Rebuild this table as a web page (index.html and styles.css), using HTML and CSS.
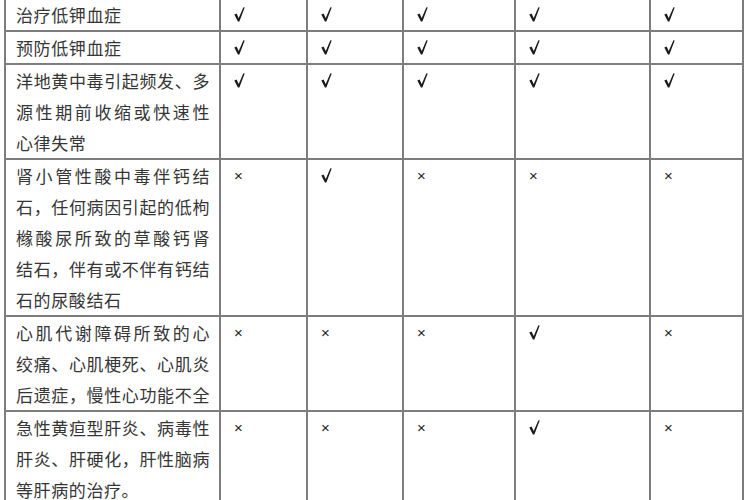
FILE: index.html
```html
<!DOCTYPE html>
<html lang="zh-CN">
<head>
<meta charset="utf-8">
<title>补钾药物适应证</title>
<link rel="stylesheet" href="styles.css">
</head>
<body>
<div class="page">
  <table class="grid">
    <colgroup>
      <col class="c-name">
      <col class="c-a">
      <col class="c-b">
      <col class="c-c">
      <col class="c-d">
      <col class="c-e">
    </colgroup>
    <tbody>
      <tr>
        <td class="name"><span class="ln end">治疗低钾血症</span></td>
        <td class="mark"><svg class="tick" viewBox="0 0 11 15"><title>√</title><path d="M0.3 7.6 L2.6 6.6 L4.7 11 L9.4 0.2 L10.7 0.6 L5.4 14.6 L3.9 14.6 Z"/></svg></td>
        <td class="mark"><svg class="tick" viewBox="0 0 11 15"><title>√</title><path d="M0.3 7.6 L2.6 6.6 L4.7 11 L9.4 0.2 L10.7 0.6 L5.4 14.6 L3.9 14.6 Z"/></svg></td>
        <td class="mark"><svg class="tick" viewBox="0 0 11 15"><title>√</title><path d="M0.3 7.6 L2.6 6.6 L4.7 11 L9.4 0.2 L10.7 0.6 L5.4 14.6 L3.9 14.6 Z"/></svg></td>
        <td class="mark"><svg class="tick" viewBox="0 0 11 15"><title>√</title><path d="M0.3 7.6 L2.6 6.6 L4.7 11 L9.4 0.2 L10.7 0.6 L5.4 14.6 L3.9 14.6 Z"/></svg></td>
        <td class="mark"><svg class="tick" viewBox="0 0 11 15"><title>√</title><path d="M0.3 7.6 L2.6 6.6 L4.7 11 L9.4 0.2 L10.7 0.6 L5.4 14.6 L3.9 14.6 Z"/></svg></td>
      </tr>
      <tr>
        <td class="name"><span class="ln end">预防低钾血症</span></td>
        <td class="mark"><svg class="tick" viewBox="0 0 11 15"><title>√</title><path d="M0.3 7.6 L2.6 6.6 L4.7 11 L9.4 0.2 L10.7 0.6 L5.4 14.6 L3.9 14.6 Z"/></svg></td>
        <td class="mark"><svg class="tick" viewBox="0 0 11 15"><title>√</title><path d="M0.3 7.6 L2.6 6.6 L4.7 11 L9.4 0.2 L10.7 0.6 L5.4 14.6 L3.9 14.6 Z"/></svg></td>
        <td class="mark"><svg class="tick" viewBox="0 0 11 15"><title>√</title><path d="M0.3 7.6 L2.6 6.6 L4.7 11 L9.4 0.2 L10.7 0.6 L5.4 14.6 L3.9 14.6 Z"/></svg></td>
        <td class="mark"><svg class="tick" viewBox="0 0 11 15"><title>√</title><path d="M0.3 7.6 L2.6 6.6 L4.7 11 L9.4 0.2 L10.7 0.6 L5.4 14.6 L3.9 14.6 Z"/></svg></td>
        <td class="mark"><svg class="tick" viewBox="0 0 11 15"><title>√</title><path d="M0.3 7.6 L2.6 6.6 L4.7 11 L9.4 0.2 L10.7 0.6 L5.4 14.6 L3.9 14.6 Z"/></svg></td>
      </tr>
      <tr>
        <td class="name"><span class="ln">洋地黄中毒引起频发、多</span><span class="ln">源性期前收缩或快速性</span><span class="ln end">心律失常</span></td>
        <td class="mark"><svg class="tick" viewBox="0 0 11 15"><title>√</title><path d="M0.3 7.6 L2.6 6.6 L4.7 11 L9.4 0.2 L10.7 0.6 L5.4 14.6 L3.9 14.6 Z"/></svg></td>
        <td class="mark"><svg class="tick" viewBox="0 0 11 15"><title>√</title><path d="M0.3 7.6 L2.6 6.6 L4.7 11 L9.4 0.2 L10.7 0.6 L5.4 14.6 L3.9 14.6 Z"/></svg></td>
        <td class="mark"><svg class="tick" viewBox="0 0 11 15"><title>√</title><path d="M0.3 7.6 L2.6 6.6 L4.7 11 L9.4 0.2 L10.7 0.6 L5.4 14.6 L3.9 14.6 Z"/></svg></td>
        <td class="mark"><svg class="tick" viewBox="0 0 11 15"><title>√</title><path d="M0.3 7.6 L2.6 6.6 L4.7 11 L9.4 0.2 L10.7 0.6 L5.4 14.6 L3.9 14.6 Z"/></svg></td>
        <td class="mark"><svg class="tick" viewBox="0 0 11 15"><title>√</title><path d="M0.3 7.6 L2.6 6.6 L4.7 11 L9.4 0.2 L10.7 0.6 L5.4 14.6 L3.9 14.6 Z"/></svg></td>
      </tr>
      <tr>
        <td class="name"><span class="ln">肾小管性酸中毒伴钙结</span><span class="ln">石，任何病因引起的低枸</span><span class="ln">橼酸尿所致的草酸钙肾</span><span class="ln">结石，伴有或不伴有钙结</span><span class="ln end">石的尿酸结石</span></td>
        <td class="mark no">×</td>
        <td class="mark"><svg class="tick" viewBox="0 0 11 15"><title>√</title><path d="M0.3 7.6 L2.6 6.6 L4.7 11 L9.4 0.2 L10.7 0.6 L5.4 14.6 L3.9 14.6 Z"/></svg></td>
        <td class="mark no">×</td>
        <td class="mark no">×</td>
        <td class="mark no">×</td>
      </tr>
      <tr>
        <td class="name"><span class="ln">心肌代谢障碍所致的心</span><span class="ln">绞痛、心肌梗死、心肌炎</span><span class="ln">后遗症，慢性心功能不全</span></td>
        <td class="mark no">×</td>
        <td class="mark no">×</td>
        <td class="mark no">×</td>
        <td class="mark"><svg class="tick" viewBox="0 0 11 15"><title>√</title><path d="M0.3 7.6 L2.6 6.6 L4.7 11 L9.4 0.2 L10.7 0.6 L5.4 14.6 L3.9 14.6 Z"/></svg></td>
        <td class="mark no">×</td>
      </tr>
      <tr>
        <td class="name"><span class="ln">急性黄疸型肝炎、病毒性</span><span class="ln">肝炎、肝硬化，肝性脑病</span><span class="ln end">等肝病的治疗。</span></td>
        <td class="mark no">×</td>
        <td class="mark no">×</td>
        <td class="mark no">×</td>
        <td class="mark"><svg class="tick" viewBox="0 0 11 15"><title>√</title><path d="M0.3 7.6 L2.6 6.6 L4.7 11 L9.4 0.2 L10.7 0.6 L5.4 14.6 L3.9 14.6 Z"/></svg></td>
        <td class="mark no">×</td>
      </tr>
    </tbody>
  </table>
</div>
</body>
</html>
```
FILE: styles.css
```css
html, body {
  margin: 0;
  padding: 0;
  background: #ffffff;
}

body {
  font-family: "Noto Sans CJK SC", "Noto Sans", sans-serif;
  color: #363636;
  overflow: hidden;
}

.page {
  padding-left: 4px;
  margin-top: -3px;
}

.grid {
  border-collapse: collapse;
  table-layout: fixed;
  width: 738px;
}

.c-name { width: 215px; }
.c-a { width: 87px; }
.c-b { width: 96px; }
.c-c { width: 112px; }
.c-d { width: 135px; }
.c-e { width: 93px; }

.grid td {
  border: 2px solid #7d7d7d;
  vertical-align: top;
  padding: 0;
  line-height: 31px;
}

.name {
  padding: 0 9px 0 10px !important;
  font-size: 17px;
  letter-spacing: 0.6px;
}

.ln {
  display: block;
  text-align: justify;
  text-align-last: justify;
  white-space: nowrap;
}

.ln.end {
  text-align-last: left;
}

.mark {
  padding-left: 13px !important;
  color: #1e1e1e;
}

.tick {
  display: block;
  width: 11px;
  height: 15px;
  margin-top: 8px;
  fill: #1c1c1c;
}

.mark.no {
  font-family: "Liberation Sans", sans-serif;
  font-size: 15px;
}
```
